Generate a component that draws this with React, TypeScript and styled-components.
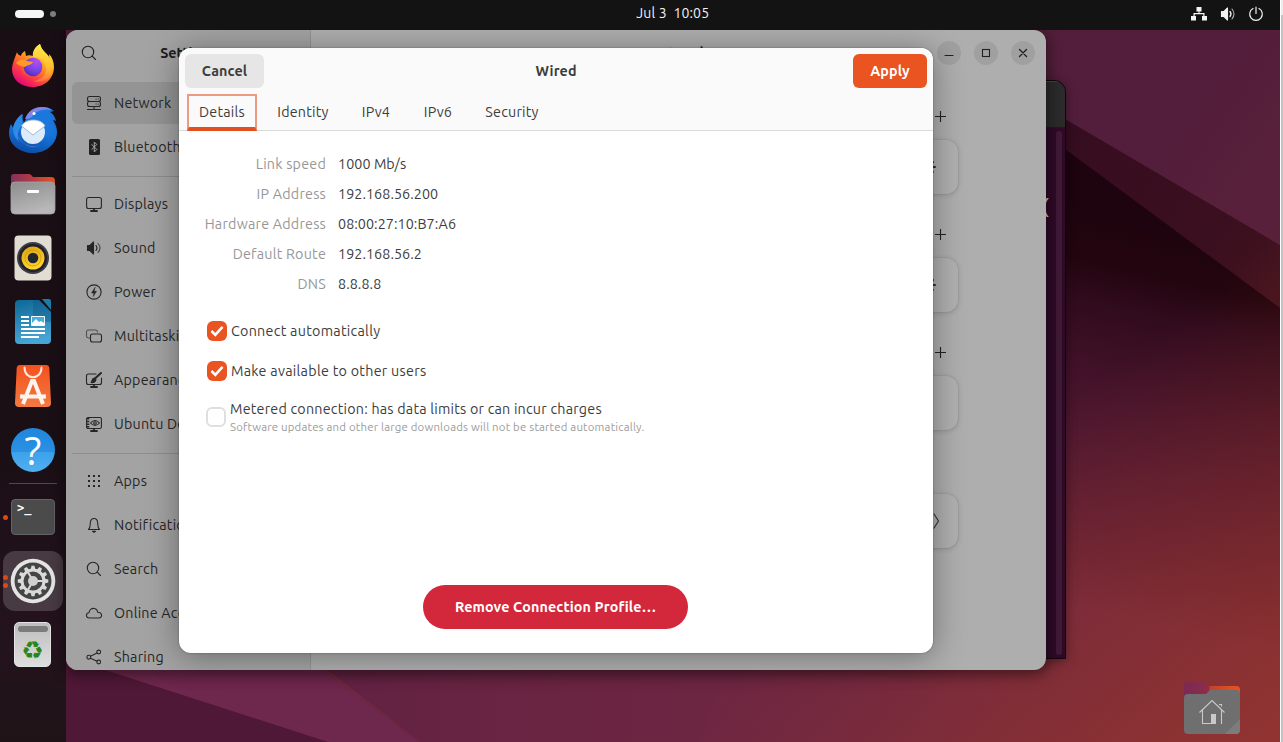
import React from "react";
import styled, { createGlobalStyle, css } from "styled-components";

const GlobalStyle = createGlobalStyle`
  * { box-sizing: border-box; }
  html, body { margin: 0; padding: 0; background: #c4c4c4; overflow: hidden; }
  body { font-family: Ubuntu, "Noto Sans", "Open Sans", sans-serif; font-size: 14.3px; line-height: 20px; letter-spacing: 0.22px; color: #3d3d3d; }
  button { font: inherit; border: 0; padding: 0; margin: 0; }
  svg { display: block; flex: none; }
`;

const Page = styled.div`
  display: flex;
  width: 1283px;
  height: 742px;
  overflow: hidden;
`;

const Screen = styled.div`
  position: relative;
  display: flex;
  flex-direction: column;
  width: 1280px;
  height: 742px;
  overflow: hidden;
`;

const ScreenEdge = styled.div`
  width: 3px;
  height: 742px;
  border-left: 1px solid #fff;
  background: linear-gradient(#ececec 0 15px, #c3c3c3 15px);
`;

const Wallpaper = styled.svg`
  position: absolute;
  inset: 0;
`;

/* ---------- top bar ---------- */

const TopBar = styled.header`
  position: relative;
  display: grid;
  grid-template-columns: 1fr auto 1fr;
  align-items: center;
  height: 30px;
  flex: none;
  padding: 0 16.5px 2px 15px;
  background: #131313;
  color: #f2f2f2;
  z-index: 3;
`;

const Workspaces = styled.div`
  display: flex;
  align-items: center;
  gap: 6px;
`;

const WorkspacePill = styled.span<{ $active?: boolean }>`
  width: ${(p) => (p.$active ? 29 : 6)}px;
  height: ${(p) => (p.$active ? 8 : 6)}px;
  border-radius: 4px;
  background: ${(p) => (p.$active ? "#f5f5f5" : "#7d7d7d")};
`;

const Clock = styled.time`
  white-space: pre;
  font-size: 14px;
  letter-spacing: 0.15px;
  padding-left: 67px;
  padding-bottom: 2px;
`;

const StatusIcons = styled.div`
  display: flex;
  justify-content: flex-end;
  align-items: center;
  gap: 13px;

  > :last-child { margin-left: -1.5px; }
`;

/* ---------- dock ---------- */

const Desktop = styled.div`
  position: relative;
  display: flex;
  flex: 1;
`;

const DockBar = styled.nav`
  display: flex;
  flex-direction: column;
  align-items: center;
  gap: 4px;
  width: 66px;
  padding-top: 6px;
  background: linear-gradient(#1a0e15, #1b0f16 60%, #24131d 85%, #1f1318);
`;

const DockItem = styled.div<{ $focused?: boolean }>`
  position: relative;
  display: flex;
  align-items: center;
  justify-content: center;
  width: 60px;
  height: 60px;
  border-radius: 12px;
  background: ${(p) => (p.$focused ? "#483a42" : "transparent")};
`;

const DockRule = styled.div`
  width: 48px;
  height: 1px;
  margin: -1px 0;
  background: #51474c;
`;

const RunningDots = styled.span`
  position: absolute;
  left: 0;
  top: 0;
  bottom: 0;
  display: flex;
  flex-direction: column;
  justify-content: center;
  gap: 3px;
`;

const RunningDot = styled.i`
  width: 5px;
  height: 5px;
  border-radius: 50%;
  background: #dd4814;
`;

/* ---------- windows ---------- */

const TerminalWindow = styled.section`
  position: absolute;
  left: 600px;
  top: 50px;
  width: 466px;
  height: 579px;
  border: 1px solid #12040d;
  border-radius: 12px 12px 0 0;
  background: #2f0a27;
  box-shadow: 0 2px 12px rgba(0, 0, 0, 0.4);
  overflow: hidden;
  display: flex;
  flex-direction: column;
`;

const TerminalTitle = styled.div`
  height: 47px;
  flex: none;
  background: #2b2b2b;
  border-top: 1px solid #444;
  border-bottom: 1px solid #1c1c1c;
`;

const TerminalBody = styled.div`
  display: flex;
  flex: 1;
  justify-content: flex-end;
  padding: 3px 3px 3px 0;
  font: 20px/24px "Liberation Mono", monospace;
  color: #d9d0cc;
`;

const TerminalText = styled.div`
  width: 16px;
  margin-top: 65px;
`;

const TerminalScroll = styled.div`
  width: 6px;
  border-radius: 3px;
  background: #401a37;
`;

const SettingsWindow = styled.section`
  position: absolute;
  left: 66px;
  top: 0;
  width: 980px;
  height: 640px;
  display: flex;
  border-radius: 12px;
  background: #aeaeae;
  box-shadow: 0 3px 14px 2px rgba(0, 0, 0, 0.45);
  overflow: hidden;
`;

const Sidebar = styled.aside`
  width: 245px;
  flex: none;
  background: #a3a3a3;
  border-right: 1px solid #949494;
`;

const SidebarHeader = styled.div`
  display: grid;
  grid-template-columns: 34px 1fr 34px;
  align-items: center;
  height: 46px;
  padding: 0 6px;
  color: #222;
`;

const HeaderIcon = styled.span`
  display: flex;
  justify-content: center;
`;

const WindowTitle = styled.h1`
  margin: 0;
  text-align: center;
  font-size: 14.3px;
  line-height: 20px;
  font-weight: 700;
  letter-spacing: -0.1px;
  color: #1c1c1c;
`;

const NavList = styled.div`
  display: flex;
  flex-direction: column;
  gap: 2px;
  padding: 6px;
`;

const NavRow = styled.div<{ $selected?: boolean }>`
  display: flex;
  align-items: center;
  gap: 12px;
  height: 42px;
  flex: none;
  padding: 0 14px;
  border-radius: 6px;
  white-space: nowrap;
  color: #262626;
  background: ${(p) => (p.$selected ? "#949494" : "transparent")};
`;

const NavRule = styled.div`
  height: 1px;
  flex: none;
  margin: 6px 0 4px;
  background: #8d8d8d;
`;

const Content = styled.main`
  flex: 1;
  display: flex;
  flex-direction: column;
`;

const ContentHeader = styled.div`
  display: grid;
  grid-template-columns: 111px 1fr 111px;
  align-items: center;
  height: 46px;
`;

const WindowControls = styled.div`
  display: flex;
  justify-content: flex-end;
  gap: 13px;
  padding-right: 11px;
`;

const ControlButton = styled.button`
  display: flex;
  align-items: center;
  justify-content: center;
  width: 24px;
  height: 24px;
  border-radius: 50%;
  background: #a0a0a0;
  color: #222;
`;

const Groups = styled.div`
  display: flex;
  flex-direction: column;
  align-self: center;
  gap: 23px;
  width: 559px;
  margin-top: 23px;
`;

const GroupHeading = styled.div`
  display: flex;
  align-items: center;
  justify-content: flex-end;
  height: 34px;
  margin-bottom: 7px;
  padding-right: 10px;
  color: #222;
`;

const GroupCard = styled.div`
  display: flex;
  align-items: center;
  justify-content: flex-end;
  height: 54px;
  padding-right: 18px;
  border-radius: 12px;
  color: #2e2e2e;
  background: #b0b0b0;
  box-shadow: 0 0 0 1px rgba(0, 0, 0, 0.04), 0 1px 4px 1px rgba(0, 0, 0, 0.11);
`;

/* ---------- connection dialog ---------- */

const Dialog = styled.section`
  position: absolute;
  left: 179px;
  top: 18px;
  width: 754px;
  height: 605px;
  display: flex;
  flex-direction: column;
  border-radius: 12px;
  background: #fff;
  box-shadow: 0 0 2px rgba(0, 0, 0, 0.35), 0 3px 32px rgba(0, 0, 0, 0.36);
  overflow: hidden;
`;

const DialogHead = styled.div`
  flex: none;
  height: 83px;
  background: #fafafa;
  border-bottom: 1px solid #dadada;
`;

const DialogTitleRow = styled.div`
  display: grid;
  grid-template-columns: 1fr 60px 1fr;
  align-items: center;
  height: 46px;
  padding: 0 6px;
`;

const boldText = css`
  font-size: 14.3px;
  font-weight: 600;
  letter-spacing: 0.13px;
`;

const DialogTitle = styled.h2`
  margin: 0;
  text-align: center;
  ${boldText}
`;

const HeadButton = styled.button<{ $suggested?: boolean }>`
  ${boldText}
  justify-self: ${(p) => (p.$suggested ? "end" : "start")};
  width: ${(p) => (p.$suggested ? 74 : 79)}px;
  height: 34px;
  border-radius: 6px;
  background: ${(p) => (p.$suggested ? "#e95420" : "#e6e6e6")};
  color: ${(p) => (p.$suggested ? "#fff" : "#3d3d3d")};
`;

const Tabs = styled.div`
  display: flex;
  gap: 8px;
  padding-left: 8px;
`;

const Tab = styled.div<{ $width: number; $active?: boolean }>`
  display: flex;
  align-items: center;
  justify-content: center;
  width: ${(p) => p.$width}px;
  height: 37px;
  padding-bottom: 1px;
  ${(p) =>
    p.$active &&
    css`
      padding-top: 2px;
      border: 2px solid #e99c81;
      border-bottom: 4px solid #e1501e;
    `}
`;

const DialogBody = styled.div`
  flex: 1;
  display: flex;
  flex-direction: column;
`;

const Facts = styled.dl`
  display: grid;
  grid-template-columns: 147px 1fr;
  grid-auto-rows: 30px;
  align-items: center;
  column-gap: 12px;
  margin: 18px 0 0;
`;

const FactName = styled.dt`
  text-align: right;
  color: #979797;
`;

const FactValue = styled.dd`
  margin: 0;
  letter-spacing: 0.07px;
`;

const Options = styled.div`
  display: flex;
  flex-direction: column;
  gap: 20px;
  margin-top: 22px;
  padding-left: 28px;
`;

const Option = styled.label<{ $tall?: boolean }>`
  display: flex;
  align-items: center;
  gap: 4px;
  letter-spacing: ${(p) => (p.$tall ? 0.22 : 0.28)}px;
  ${(p) => p.$tall && "margin: -2px 0 0 -1px;"}
`;

const CheckBox = styled.span<{ $on?: boolean }>`
  display: flex;
  align-items: center;
  justify-content: center;
  width: 20px;
  height: 20px;
  border-radius: 6px;
  background: ${(p) => (p.$on ? "#e95420" : "#fff")};
  border: ${(p) => (p.$on ? "0" : "2px solid #dfdfdf")};
`;

const OptionText = styled.span`
  display: flex;
  flex-direction: column;
`;

const OptionHint = styled.small`
  font-size: 11.4px;
  line-height: 15px;
  letter-spacing: 0.19px;
  color: #9b9b9b;
`;

const RemoveButton = styled.button`
  ${boldText}
  align-self: flex-start;
  margin: auto 0 24px 244px;
  width: 265px;
  height: 44px;
  border-radius: 22px;
  background: #d3283c;
  color: #fff;
`;

const HomeShortcut = styled.div`
  position: absolute;
  left: 1184px;
  top: 652px;
`;

/* ---------- drawings ---------- */

const Firefox = () => (
  <svg width="44" height="44" viewBox="0 0 44 44">
    <defs>
      <linearGradient id="ffBody" x1=".85" y1=".1" x2=".25" y2="1">
        <stop offset="0" stopColor="#fff44f" />
        <stop offset=".35" stopColor="#ffa71e" />
        <stop offset=".65" stopColor="#ff4b3b" />
        <stop offset="1" stopColor="#e3007f" />
      </linearGradient>
      <linearGradient id="ffFlame" x1=".6" y1="0" x2=".5" y2="1">
        <stop offset="0" stopColor="#fff04a" />
        <stop offset=".6" stopColor="#ffbd2f" />
        <stop offset="1" stopColor="#ff7139" />
      </linearGradient>
      <radialGradient id="ffGlobe" cx=".7" cy=".2" r=".9">
        <stop offset="0" stopColor="#b44df5" />
        <stop offset=".6" stopColor="#7542e5" />
        <stop offset="1" stopColor="#4a2ba8" />
      </radialGradient>
    </defs>
    <path d="M6 8c-1 3-2 5-3 8-1 3-2 6-2 9 0 11 9 18 21 18s21-9 21-20c0-5-2-10-5-13l1 5C37 9 31 8 29 0c-5 3-7 7-7 12-3-1-5-1-7 0l-1-5c-2 1-4 3-4 5-2-1-4-2-4-4z" fill="url(#ffBody)" />
    <path d="M29 0c-5 3-8 8-7 13 6-1 14 5 13 13-1 7-7 11-13 11 9 3 20-3 20-14 0-5-1-9-4-12l1 5C37 9 31 8 29 0z" fill="url(#ffFlame)" />
    <circle cx="22" cy="23" r="9.300" fill="url(#ffGlobe)" />
    <path d="M12.500 21c0 7 4 11 10 11.500-7 1.500-12-3-12-9z" fill="#ff5d33" opacity=".5" />
    <path d="M5 19c3-4 7-4 11-2l6 1c-1 3-6 3-8 5-3-1-6-1-9-4z" fill="#ff9a22" />
  </svg>
);

const Thunderbird = () => (
  <svg width="50" height="48" viewBox="0 0 50 48">
    <defs>
      <linearGradient id="tbBody" x1=".7" y1="0" x2=".4" y2="1">
        <stop offset="0" stopColor="#1c78dc" />
        <stop offset=".5" stopColor="#1877df" />
        <stop offset="1" stopColor="#0b4ea6" />
      </linearGradient>
    </defs>
    <path d="M18 13C20 6 26 1 34 1c5 0 9 2 12 4l-4 1c4 3 5 5 6 9l-3-1c3 5 4 8 4 12 0 12-11 21-24 21S1 39 1 27c0-4 1-7 2-9l2 4c1-6 5-11 10-14-1 4 0 7 1 9z" fill="url(#tbBody)" />
    <path d="M17 13C20 5 26 1 34 1c4 0 8 1 10 3-9-2-17 1-20 7-2 1-4 2-7 2z" fill="#7f86e8" />
    <path d="M5 23c1-7 5-12 9-15-1 5 1 9-2 14-2 4-4 8-1 14-4-4-6-8-6-13z" fill="#2b8be6" />
    <path d="M8 24c2 12 14 20 24 15-4 3-11 3-15-1-5-3-9-7-9-14z" fill="#8a83df" opacity=".7" />
    <ellipse cx="25" cy="26" rx="12" ry="12" fill="#dcebfb" />
    <path d="M13.500 20c4-8 20-8 23.500 0l-12 9z" fill="#fff" stroke="#93b3d8" strokeWidth=".9" />
    <circle cx="26" cy="7.500" r="1.500" fill="#fff" />
  </svg>
);

const FilesIcon = () => (
  <svg width="46" height="42" viewBox="0 0 46 42">
    <defs>
      <linearGradient id="flTab"><stop offset="0" stopColor="#85305c" /><stop offset=".5" stopColor="#b53b43" /><stop offset="1" stopColor="#e95420" /></linearGradient>
      <linearGradient id="flBody" x2=".4" y2="1"><stop offset="0" stopColor="#8c8c8c" /><stop offset="1" stopColor="#b8b8b8" /></linearGradient>
    </defs>
    <path d="M1 15V4q0-3 3-3h15q2 0 3 2l1 1h18q4 0 4 4v8z" fill="url(#flTab)" />
    <rect x="1" y="9" width="44" height="32" rx="4" fill="url(#flBody)" stroke="#a4a4a4" strokeWidth=".8" />
    <rect x="17" y="17" width="12" height="3" rx="1" fill="#fff" />
  </svg>
);

const Rhythmbox = () => (
  <svg width="38" height="46" viewBox="0 0 38 46">
    <defs>
      <linearGradient id="rbCone" y2="1" x2=".3"><stop offset="0" stopColor="#dba30f" /><stop offset="1" stopColor="#ffd42e" /></linearGradient>
    </defs>
    <rect x=".5" y=".5" width="37" height="45" rx="4" fill="#e2ddd2" />
    <circle cx="19" cy="23" r="16" fill="#3d3c47" />
    <circle cx="19" cy="23" r="14" fill="#22212b" />
    <circle cx="19" cy="23" r="11.500" fill="url(#rbCone)" />
    <circle cx="19" cy="23" r="8" fill="none" stroke="#c7930b" strokeWidth=".7" />
    <circle cx="19" cy="23" r="5.300" fill="#23262d" />
  </svg>
);

const Writer = () => (
  <svg width="38" height="46" viewBox="0 0 38 46">
    <defs>
      <linearGradient id="wr" y2="1" x2=".2"><stop offset="0" stopColor="#0d6797" /><stop offset="1" stopColor="#47a5d6" /></linearGradient>
    </defs>
    <path d="M5 1h20l12 12v28q0 4-4 4H5q-4 0-4-4V5q0-4 4-4z" fill="url(#wr)" />
    <path d="M19 1h6l12 12v10H19z" fill="#0e547e" opacity=".35" />
    <path d="M28 0h7q2 0 2 2v9z" fill="#1b7cab" />
    <g fill="#fff">
      <rect x="7" y="17" width="8" height="2" /><rect x="7" y="21" width="8" height="2" /><rect x="7" y="25" width="8" height="2" />
      <rect x="7" y="29" width="24" height="2" /><rect x="7" y="33" width="24" height="2" /><rect x="7" y="37" width="18" height="2" />
      <rect x="17" y="17" width="14" height="10" rx="1" />
    </g>
    <path d="M18 18h12v6l-3-2-2 1-3-3-4 4z" fill="#44aee3" />
  </svg>
);

const AppCenter = () => (
  <svg width="38" height="44" viewBox="0 0 38 44">
    <defs>
      <linearGradient id="ac" y2="1" x2="0"><stop offset="0" stopColor="#f4511e" /><stop offset="1" stopColor="#f37a42" /></linearGradient>
    </defs>
    <path d="M6 1h26q3 0 3.300 3L37 39q0 4-4 4H5q-4 0-4-4L2.700 4Q3 1 6 1z" fill="url(#ac)" />
    <path d="M10.500 3.500c0 13 17 13 17 0" fill="none" stroke="#fde6dc" strokeWidth="2" strokeLinecap="round" />
    <path d="M9 40l9-23h2l9 23M6.500 32.500h25" fill="none" stroke="#fff5ef" strokeWidth="4" />
    <path d="M7 30.500v4M31 30.500v4" stroke="#fff5ef" strokeWidth="1.500" />
  </svg>
);

const HelpCircle = styled.span`
  display: flex;
  align-items: center;
  justify-content: center;
  width: 44px;
  height: 44px;
  border-radius: 50%;
  background: linear-gradient(#1f86dc, #2a91e4 54%, #3ca2eb 55%, #51aff0);
  color: #fff;
  font: 39px/44px "Open Sans", "Noto Sans", sans-serif;
  letter-spacing: 0;
`;

const TerminalTile = styled.span`
  width: 44px;
  height: 36px;
  padding: 1px 5px;
  border-radius: 4px;
  background: #4b4b4b;
  border: 1px solid #646464;
  font: bold 12px/14px "DejaVu Sans Mono", monospace;
  letter-spacing: 0;
  color: #fff;
`;

const gearTeeth = Array.from({ length: 12 }, (_, i) => i * 30);

const SettingsIcon = () => (
  <svg width="46" height="46" viewBox="-23 -23 46 46">
    <circle r="22.300" fill="#e4e4e4" />
    <circle r="18.500" fill="#454545" />
    {gearTeeth.map((a) => (
      <path key={a} d="M-2.400-11l.9-4.300h3l.9 4.300z" fill="#d9d9d9" transform={`rotate(${a})`} />
    ))}
    <circle r="11" fill="none" stroke="#d9d9d9" strokeWidth="3" />
    {[0, 120, 240].map((a) => (
      <path key={a} d="M0 0V10" stroke="#d9d9d9" strokeWidth="2" transform={`rotate(${a + 30})`} />
    ))}
    <circle r="5" fill="#cfcfcf" />
  </svg>
);

const TrashCan = styled.span`
  display: flex;
  flex-direction: column;
  align-items: center;
  width: 37px;
  height: 45px;
  margin: -1px 1px 0 0;
  padding-top: 3px;
  border-radius: 5px;
  border: 1px solid #e4e4e4;
  background: linear-gradient(#bdbdbd, #dedede);
  color: #26871c;
  font: 25px/38px "DejaVu Sans", sans-serif;
  letter-spacing: 0;
`;

const TrashSlot = styled.i`
  width: 30px;
  height: 6px;
  flex: none;
  border-radius: 3px;
  background: #7c7c7c;
`;

const Line = styled.svg.attrs({ width: 16, height: 16, viewBox: "0 0 16 16" })`
  fill: none;
  stroke: currentColor;
  stroke-width: 1.1;
  stroke-linecap: round;
  stroke-linejoin: round;
  overflow: visible;
`;

const SearchGlyph = () => (
  <Line><circle cx="7" cy="7" r="5.700" /><path d="M11.200 11.200 14.500 14.500" /></Line>
);

const navIcons: Record<string, React.ReactNode> = {
  network: (
    <Line>
      <rect x="1.500" y="1.500" width="13" height="5" rx="2" /><rect x="1.500" y="6.500" width="13" height="5" rx="2" />
      <path d="M1.500 14.500h13M8 11.500v3M10 4h.2M12.200 4h.2M10 9h.2M12.200 9h.2" />
    </Line>
  ),
  bluetooth: (
    <Line>
      <rect x="3" y="0" width="11" height="16" rx="1.500" fill="#222" stroke="none" />
      <path d="M5.800 5.500l5 5-2.500 2.500V3l2.500 2.500-5 5" stroke="#a3a3a3" strokeWidth="1" />
    </Line>
  ),
  displays: (
    <Line><rect x=".6" y="1.500" width="14.800" height="11" rx="2" /><path d="M5 15h6M8 13.500v1" strokeWidth="1.900" /></Line>
  ),
  sound: (
    <Line>
      <path d="M1.500 5.500h2.500L7.500 2v12L4 10.500H1.500z" fill="currentColor" />
      <path d="M10 5.500q2 2.500 0 5" /><path d="M12 3.500q4 4.500 0 9" strokeOpacity=".75" />
    </Line>
  ),
  power: (
    <Line><circle cx="8" cy="8" r="7.100" /><path d="M9 3.500 5.500 9H8l-.8 3.500L10.500 7.300H8.200z" fill="currentColor" strokeWidth=".5" /></Line>
  ),
  multitasking: (
    <Line><path d="M3.500 10H2.500q-2-.2-2-2V4q0-2 2-2h7q2 0 2 2" strokeOpacity=".65" /><rect x="4.500" y="6" width="11" height="8" rx="2" /></Line>
  ),
  appearance: (
    <Line>
      <path d="M10 2H2.500q-2 0-2 2v6.500q0 2 2 2h11q2 0 2-2V6" /><path d="M5 15h6M8 13.500v1" strokeWidth="1.900" />
      <path d="M15 1 9.500 6" strokeWidth="2" /><path d="M5 10.500c1.500-.5 0-4 3.500-4.500l1.500 1.500c-.5 3-3 3.500-5 3z" fill="currentColor" />
    </Line>
  ),
  ubuntu: (
    <Line>
      <rect x=".6" y="1.500" width="14.800" height="11" rx="1.500" /><path d="M5 15h6M8 13.500v1" strokeWidth="1.900" />
      <path d="M2 2v10" strokeWidth="2.600" strokeDasharray="1.500 1.200" strokeLinecap="butt" />
      <path d="M4.500 7q4.500-5 9 0-4.500 5-9 0z" /><circle cx="9" cy="7" r="1.300" />
    </Line>
  ),
  apps: (
    <Line>
      {[3, 8, 13].map((y) => [3, 8, 13].map((x) => (
        <rect key={`${x}-${y}`} x={x - 1} y={y - 1} width="2" height="2" fill="currentColor" stroke="none" />
      )))}
    </Line>
  ),
  bell: (
    <Line>
      <path d="M2.500 12.500c2-1.500 1.500-4 1.800-6.500C4.500 3 6 1.500 8 1.500S11.500 3 11.700 6c.3 2.500-.2 5 1.800 6.500z" />
      <path d="M6.500 14.200h3l-1.500 1z" fill="currentColor" />
    </Line>
  ),
  search: <SearchGlyph />,
  cloud: (
    <Line><path d="M3.500 13C-.5 13-.5 8 3 7.800 3.300 4.500 6 2.800 8.500 3.500c2 .5 3 2 3.200 3.700 5 .1 5 5.800 1 5.800z" /></Line>
  ),
  sharing: (
    <Line>
      <circle cx="2.800" cy="8.200" r="1.900" /><circle cx="12.700" cy="3" r="1.900" /><circle cx="12.700" cy="13" r="1.900" />
      <path d="M4.500 7.200 11 4M4.500 9.200l6.500 3" />
    </Line>
  ),
};

const navigation: Array<Array<{ icon: string; label: string; selected?: boolean }>> = [
  [
    { icon: "network", label: "Network", selected: true },
    { icon: "bluetooth", label: "Bluetooth" },
  ],
  [
    { icon: "displays", label: "Displays" },
    { icon: "sound", label: "Sound" },
    { icon: "power", label: "Power" },
    { icon: "multitasking", label: "Multitasking" },
    { icon: "appearance", label: "Appearance" },
    { icon: "ubuntu", label: "Ubuntu Desktop" },
  ],
  [
    { icon: "apps", label: "Apps" },
    { icon: "bell", label: "Notifications" },
    { icon: "search", label: "Search" },
    { icon: "cloud", label: "Online Accounts" },
    { icon: "sharing", label: "Sharing" },
  ],
];

const tabs = [
  { label: "Details", width: 70, active: true },
  { label: "Identity", width: 76 },
  { label: "IPv4", width: 54 },
  { label: "IPv6", width: 54 },
  { label: "Security", width: 78 },
];

const facts = [
  ["Link speed", "1000 Mb/s"],
  ["IP Address", "192.168.56.200"],
  ["Hardware Address", "08:00:27:10:B7:A6"],
  ["Default Route", "192.168.56.2"],
  ["DNS", "8.8.8.8"],
];

const Plus = () => <Line><path d="M8.500 3v11M3 8.500h11" strokeLinecap="butt" /></Line>;

const GearLine = styled(Line)`
  margin-right: 4px;
`;

const Gear = () => (
  <GearLine><circle cx="8" cy="8" r="4" strokeWidth="2.500" /><path d="M8 1v14M1 8h14M3 3l10 10M13 3 3 13" strokeWidth="2" strokeDasharray="2.500 9" /></GearLine>
);

const Check = () => (
  <svg width="14" height="14" viewBox="0 0 14 14" fill="none" stroke="#fff" strokeWidth="2.600">
    <path d="M1.500 7 5.300 10.800 12.500 2.800" />
  </svg>
);

const groupControls = [
  { add: true, icon: <Gear /> },
  { add: true, icon: <Gear /> },
  { add: true, icon: null },
  { add: false, icon: <Line><path d="M10 1l4.500 7-4.500 7" /></Line> },
];

const Backdrop = () => (
  <Wallpaper width="1280" height="742" viewBox="0 0 1280 742">
    <defs>
      <linearGradient id="deep" gradientUnits="userSpaceOnUse" x1="1220" y1="230" x2="1130" y2="620">
        <stop offset="0" stopColor="#1d040e" /><stop offset=".15" stopColor="#23050f" />
        <stop offset=".25" stopColor="#310b1e" /><stop offset=".45" stopColor="#45132b" />
        <stop offset=".62" stopColor="#531932" /><stop offset=".88" stopColor="#662138" />
        <stop offset="1" stopColor="#702741" />
      </linearGradient>
      <linearGradient id="ember" gradientUnits="userSpaceOnUse" x1="1020" y1="440" x2="1260" y2="740">
        <stop offset="0" stopColor="#b04018" stopOpacity="0" /><stop offset="1" stopColor="#b04020" stopOpacity=".5" />
      </linearGradient>
      <linearGradient id="band" gradientUnits="userSpaceOnUse" x1="1066" y1="130" x2="1280" y2="290">
        <stop offset="0" stopColor="#360d20" /><stop offset=".7" stopColor="#3b0f1f" /><stop offset="1" stopColor="#43131e" />
      </linearGradient>
      <linearGradient id="sky" x2="1" y2=".4">
        <stop offset=".85" stopColor="#531e3b" /><stop offset="1" stopColor="#5b213a" />
      </linearGradient>
      <linearGradient id="floor"><stop offset="0" stopColor="#622243" /><stop offset="1" stopColor="#6f2743" stopOpacity="0" /></linearGradient>
    </defs>
    <rect width="1280" height="742" fill="url(#sky)" />
    <path d="M1000 81 1280 245V742H0V500z" fill="url(#band)" />
    <path d="M1000 101 1280 308V742H0V500z" fill="url(#deep)" />
    <path d="M900 200H1280V742H700z" fill="url(#ember)" />
    <path d="M315 660H1000V742H420z" fill="url(#floor)" />
    <path d="M60 650H295L418 742H60z" fill="#6e274d" />
    <path d="M60 655 105 670 328 742H60z" fill="#4f1836" />
  </Wallpaper>
);

export default function App() {
  return (
    <Page>
      <GlobalStyle />
      <Screen>
        <Backdrop />
        <TopBar>
          <Workspaces><WorkspacePill $active /><WorkspacePill /></Workspaces>
          <Clock>{"Jul 3  10:05"}</Clock>
          <StatusIcons>
            <svg width="16" height="14" viewBox="0 0 16 14" fill="#f5f5f5">
              <path d="M5.500 0h5v4.500h-2V6h5v3H16v4.500h-5V9h1.300V7.200H3.700V9H5v4.500H0V9h2.500V6h5V4.500h-2z" />
            </svg>
            <Line><path d="M1.500 5.500h2.500L7.500 2v12L4 10.500H1.500z" fill="currentColor" /><path d="M10 5.500q2 2.500 0 5" strokeWidth="1.300" /><path d="M12 3q4 5 0 10" strokeOpacity=".7" /></Line>
            <Line><path d="M5 2.500a6.300 6.300 0 1 0 6 0M8 1v6.500" strokeWidth="1.200" /></Line>
          </StatusIcons>
        </TopBar>
        <Desktop>
          <DockBar>
            <DockItem><Firefox /></DockItem>
            <DockItem><Thunderbird /></DockItem>
            <DockItem><FilesIcon /></DockItem>
            <DockItem><Rhythmbox /></DockItem>
            <DockItem><Writer /></DockItem>
            <DockItem><AppCenter /></DockItem>
            <DockItem><HelpCircle>?</HelpCircle></DockItem>
            <DockRule />
            <DockItem><RunningDots><RunningDot /></RunningDots><TerminalTile>&gt;_</TerminalTile></DockItem>
            <DockItem $focused><RunningDots><RunningDot /><RunningDot /></RunningDots><SettingsIcon /></DockItem>
            <DockItem><TrashCan><TrashSlot />♻</TrashCan></DockItem>
          </DockBar>

          <TerminalWindow>
            <TerminalTitle />
            <TerminalBody><TerminalText>(</TerminalText><TerminalScroll /></TerminalBody>
          </TerminalWindow>

          <SettingsWindow>
            <Sidebar>
              <SidebarHeader>
                <HeaderIcon><SearchGlyph /></HeaderIcon>
                <WindowTitle>Settings</WindowTitle>
              </SidebarHeader>
              <NavList>
                {navigation.map((group, i) => (
                  <React.Fragment key={i}>
                    {i > 0 && <NavRule />}
                    {group.map((item) => (
                      <NavRow key={item.label} $selected={item.selected}>
                        {navIcons[item.icon]}
                        {item.label}
                      </NavRow>
                    ))}
                  </React.Fragment>
                ))}
              </NavList>
            </Sidebar>
            <Content>
              <ContentHeader>
                <span />
                <WindowTitle>Network</WindowTitle>
                <WindowControls>
                  <ControlButton><Line><path d="M4 10.500h8" /></Line></ControlButton>
                  <ControlButton><Line><rect x="4.500" y="4.500" width="7" height="7" strokeLinejoin="miter" /></Line></ControlButton>
                  <ControlButton><Line><path d="M4.500 4.500l7 7M11.500 4.500l-7 7" strokeWidth="1.400" /></Line></ControlButton>
                </WindowControls>
              </ContentHeader>
              <Groups>
                {groupControls.map((g, i) => (
                  <div key={i}>
                    <GroupHeading>{g.add && <Plus />}</GroupHeading>
                    <GroupCard>{g.icon}</GroupCard>
                  </div>
                ))}
              </Groups>
            </Content>
          </SettingsWindow>

          <Dialog>
            <DialogHead>
              <DialogTitleRow>
                <HeadButton>Cancel</HeadButton>
                <DialogTitle>Wired</DialogTitle>
                <HeadButton $suggested>Apply</HeadButton>
              </DialogTitleRow>
              <Tabs>
                {tabs.map((t) => (
                  <Tab key={t.label} $width={t.width} $active={t.active}>{t.label}</Tab>
                ))}
              </Tabs>
            </DialogHead>
            <DialogBody>
              <Facts>
                {facts.map(([name, value]) => (
                  <React.Fragment key={name}>
                    <FactName>{name}</FactName>
                    <FactValue>{value}</FactValue>
                  </React.Fragment>
                ))}
              </Facts>
              <Options>
                <Option><CheckBox $on><Check /></CheckBox>Connect automatically</Option>
                <Option><CheckBox $on><Check /></CheckBox>Make available to other users</Option>
                <Option $tall>
                  <CheckBox />
                  <OptionText>
                    Metered connection: has data limits or can incur charges
                    <OptionHint>Software updates and other large downloads will not be started automatically.</OptionHint>
                  </OptionText>
                </Option>
              </Options>
              <RemoveButton>Remove Connection Profile…</RemoveButton>
            </DialogBody>
          </Dialog>

          <HomeShortcut>
            <svg width="56" height="52" viewBox="0 0 56 52">
              <defs>
                <linearGradient id="hmTab"><stop offset="0" stopColor="#7b2955" /><stop offset=".45" stopColor="#8f2d47" /><stop offset=".46" stopColor="#c24230" /><stop offset="1" stopColor="#e95420" /></linearGradient>
              </defs>
              <path d="M0 18V4q0-4 4-4h16q2 0 3 2l2 2h27q4 0 4 4v10z" fill="url(#hmTab)" />
              <path d="M0 16q0-4 4-4h18l4-4h26q4 0 4 4v36q0 4-4 4H4q-4 0-4-4z" fill="#6f6f6f" />
              <path d="M56 37v11q0 4-4 4H41z" fill="#7c7c7c" />
              <path d="M15.500 30.500 28 18.500 40.500 30.500M18.500 28v13.500h13M37.500 28v14M35 22.500h2.500v2" fill="none" stroke="#c9c9c9" strokeWidth="1.100" />
              <rect x="27" y="32" width="5" height="10" fill="#c9c9c9" />
            </svg>
          </HomeShortcut>
        </Desktop>
      </Screen>
      <ScreenEdge />
    </Page>
  );
}
